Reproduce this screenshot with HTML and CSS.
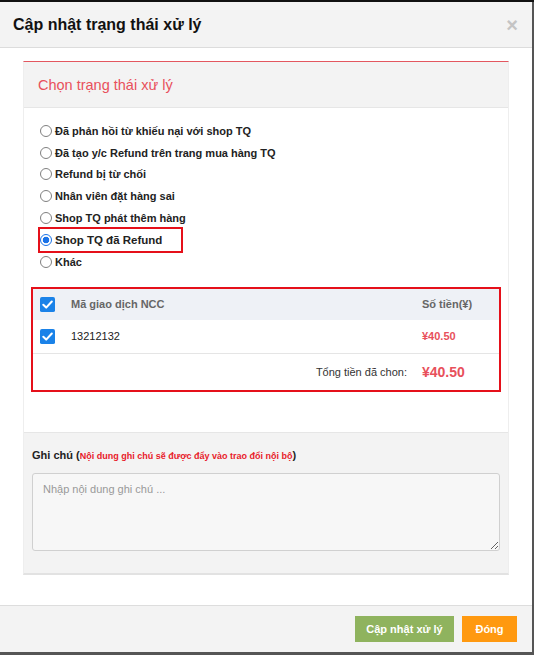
FILE: index.html
```html
<!DOCTYPE html>
<html lang="vi">
<head>
<meta charset="utf-8">
<link rel="stylesheet" href="styles.css">
</head>
<body>
<div class="modal">
  <div class="modal-header">
    <h4 class="modal-title">Cập nhật trạng thái xử lý</h4>
    <span class="close">×</span>
  </div>
  <div class="modal-body">
    <div class="panel">
      <div class="panel-heading">Chọn trạng thái xử lý</div>
      <div class="panel-body">
        <ul class="radios">
          <li><label><span class="radio"></span>Đã phản hồi từ khiếu nại với shop TQ</label></li>
          <li><label><span class="radio"></span>Đã tạo y/c Refund trên trang mua hàng TQ</label></li>
          <li><label><span class="radio"></span>Refund bị từ chối</label></li>
          <li><label><span class="radio"></span>Nhân viên đặt hàng sai</label></li>
          <li><label><span class="radio"></span>Shop TQ phát thêm hàng</label></li>
          <li class="selected"><label><span class="radio checked"></span>Shop TQ đã Refund</label></li>
          <li><label><span class="radio"></span>Khác</label></li>
        </ul>
        <div class="refund-box">
          <div class="row head">
            <span class="cb"><svg viewBox="0 0 16 16" width="15" height="15"><rect x="0" y="0" width="16" height="16" rx="2" fill="#1a82e8"/><path d="M3.5 8.3 L6.6 11.3 L12.6 4.8" fill="none" stroke="#fff" stroke-width="2.2" stroke-linecap="round" stroke-linejoin="round"/></svg></span>
            <span class="code">Mã giao dịch NCC</span>
            <span class="amt">Số tiền(¥)</span>
          </div>
          <div class="row item">
            <span class="cb"><svg viewBox="0 0 16 16" width="15" height="15"><rect x="0" y="0" width="16" height="16" rx="2" fill="#1a82e8"/><path d="M3.5 8.3 L6.6 11.3 L12.6 4.8" fill="none" stroke="#fff" stroke-width="2.2" stroke-linecap="round" stroke-linejoin="round"/></svg></span>
            <span class="code">13212132</span>
            <span class="amt red">¥40.50</span>
          </div>
          <div class="row total">
            <span class="total-label">Tổng tiền đã chon:</span>
            <span class="amt total-amt">¥40.50</span>
          </div>
        </div>
      </div>
      <div class="note">
        <div class="note-label">Ghi chú (<span class="note-hint">Nội dung ghi chú sẽ được đẩy vào trao đổi nội bộ</span>)</div>
        <textarea class="note-input" placeholder="Nhập nội dung ghi chú ..."></textarea>
      </div>
    </div>
  </div>
  <div class="modal-footer">
    <button class="btn btn-green">Cập nhật xử lý</button>
    <button class="btn btn-orange">Đóng</button>
  </div>
</div>
</body>
</html>
```
FILE: styles.css
```css
html, body {
  margin: 0;
  padding: 0;
}
body {
  background: #555;
  font-family: "Liberation Sans", Arial, sans-serif;
  width: 534px;
  height: 655px;
  overflow: hidden;
  border-top: 2px solid #111;
  box-sizing: border-box;
}
.modal {
  width: 532px;
  height: 650px;
  background: #fff;
  display: flex;
  flex-direction: column;
}
.modal-header {
  height: 45px;
  background: #f3f3f3;
  border-bottom: 1px solid #dcdcdc;
  display: flex;
  align-items: center;
  justify-content: space-between;
  padding: 0 14px 0 13px;
  flex-shrink: 0;
}
.modal-title {
  margin: 0;
  font-size: 16px;
  font-weight: bold;
  color: #111;
}
.close {
  font-size: 20px;
  color: #c4c4c4;
  font-weight: bold;
  line-height: 1;
}
.modal-body {
  flex: 1;
  padding: 13px 23px 0 23px;
}
.panel {
  border: 1px solid #eee;
  border-top: 1px solid #e3575f;
  border-bottom: 2px solid #e2e2e2;
}
.panel-heading {
  height: 45px;
  background: #f3f3f3;
  border-bottom: 1px solid #e6e6e6;
  color: #e8505b;
  font-size: 14.5px;
  display: flex;
  align-items: center;
  padding-left: 14px;
}
.panel-body {
  padding: 12px 7px 40px 7px;
}
.radios {
  list-style: none;
  margin: 0;
  padding: 0 0 0 9px;
}
.radios li {
  height: 21.8px;
  display: flex;
  align-items: center;
}
.radios label {
  display: flex;
  align-items: center;
  font-size: 11px;
  font-weight: bold;
  color: #222;
}
.radio {
  width: 12px;
  height: 12px;
  border: 1px solid #808080;
  border-radius: 50%;
  background: #fff;
  margin-right: 3px;
  box-sizing: border-box;
}
.radio.checked {
  border: 1px solid #1a73e8;
  background: radial-gradient(circle, #1a73e8 0 3px, #fff 3.6px);
}
.radios li.selected {
  width: 141px;
  outline: 2px solid #e5101a;
  outline-offset: 0;
}
.radios li.selected label {
  font-size: 11.5px;
}
.refund-box {
  margin-top: 14px;
  border: 2px solid #e5101a;
}
.row {
  display: flex;
  align-items: center;
  font-size: 11px;
  color: #333;
}
.row.head {
  height: 31px;
  background: #eef1f6;
  color: #666;
  font-weight: bold;
}
.row.item {
  height: 33px;
  border-bottom: 1px solid #e5e5e5;
}
.row.total {
  height: 36px;
  justify-content: flex-end;
}
.cb {
  width: 15px;
  height: 15px;
  margin-left: 7px;
  display: flex;
}
.code {
  margin-left: 16px;
  flex: 1;
}
.item .code {
  color: #222;
}
.amt {
  width: 77px;
}
.red {
  color: #e8505b;
  font-weight: bold;
}
.total-label {
  color: #333;
  font-size: 11px;
  margin-right: 15px;
}
.total-amt {
  color: #e8505b;
  font-size: 14px;
  font-weight: bold;
}
.note {
  background: #f3f3f3;
  border-top: 1px solid #e6e6e6;
  padding: 16px 8px 22px 8px;
}
.note-label {
  font-size: 11px;
  font-weight: bold;
  color: #222;
}
.note-hint {
  color: #e8202a;
  font-size: 9px;
}
.note-input {
  display: block;
  margin-top: 12px;
  width: 100%;
  height: 78px;
  box-sizing: border-box;
  background: #f7f7f7;
  border: 1px solid #d0d0d0;
  border-radius: 3px;
  padding: 9px 10px;
  font-family: "Liberation Sans", Arial, sans-serif;
  font-size: 11px;
  resize: vertical;
}
.note-input::placeholder {
  color: #999;
}
.modal-footer {
  height: 46px;
  background: #f3f3f3;
  border-top: 1px solid #ddd;
  display: flex;
  align-items: center;
  justify-content: flex-end;
  padding-right: 15px;
  gap: 8px;
  flex-shrink: 0;
}
.btn {
  border: none;
  height: 26px;
  color: #fff;
  font-family: "Liberation Sans", Arial, sans-serif;
  font-size: 11px;
  font-weight: bold;
  padding: 0;
  white-space: nowrap;
}
.btn-green {
  background: #8fb35e;
  width: 99px;
}
.btn-orange {
  background: #ff9910;
  width: 55px;
}
```
